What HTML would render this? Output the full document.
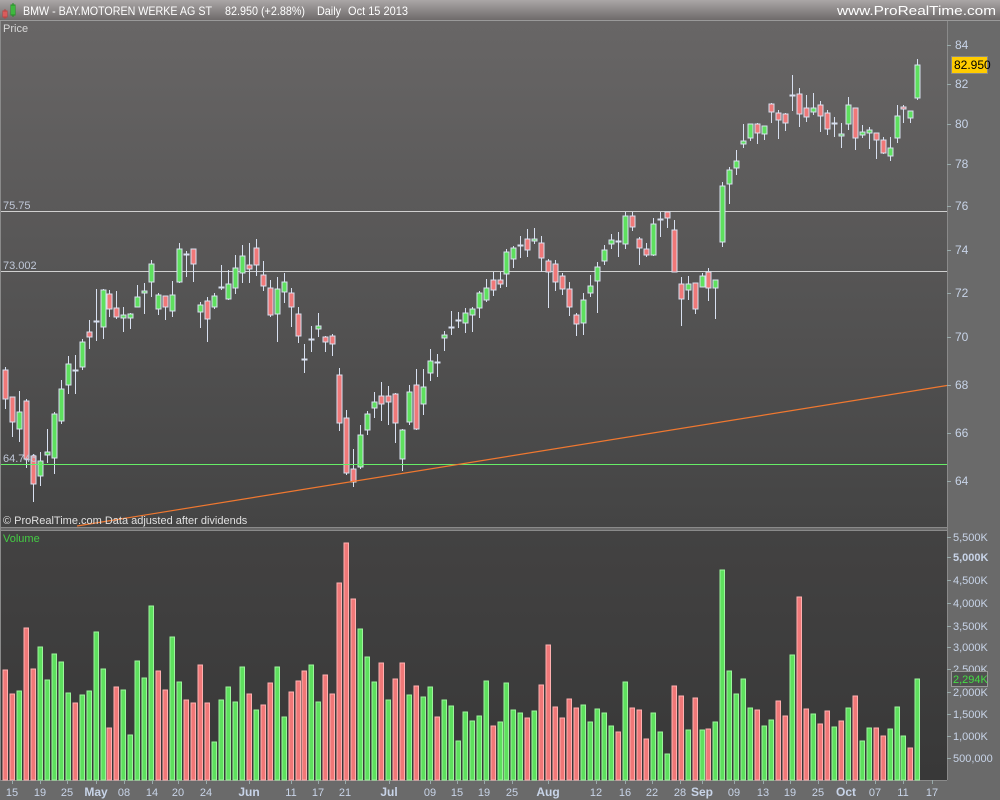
<!DOCTYPE html>
<html><head><meta charset="utf-8">
<style>
body{margin:0;width:1000px;height:800px;overflow:hidden;background:#6a6a6a;font-family:"Liberation Sans",sans-serif}
svg{display:block}
</style></head><body>
<svg id="s" width="1000" height="800" xmlns="http://www.w3.org/2000/svg" font-family="Liberation Sans, sans-serif">
<defs>
<linearGradient id="tb" x1="0" y1="0" x2="0" y2="1"><stop offset="0" stop-color="#aaa6a6"/><stop offset="1" stop-color="#6e6a6a"/></linearGradient>
<linearGradient id="pp" x1="0" y1="0" x2="0" y2="1"><stop offset="0" stop-color="#686666"/><stop offset="1" stop-color="#444444"/></linearGradient>
<linearGradient id="vp" x1="0" y1="0" x2="0" y2="1"><stop offset="0" stop-color="#434242"/><stop offset="1" stop-color="#383838"/></linearGradient>
</defs>
<rect x="0" y="0" width="1000" height="800" fill="#6a6a6a"/>
<rect x="0" y="0" width="1000" height="20" fill="url(#tb)"/>
<line x1="0" y1="20.5" x2="1000" y2="20.5" stroke="#9a9a9a"/>
<rect x="3" y="11" width="4" height="6" fill="#f07878" stroke="#c04040" stroke-width="1"/>
<line x1="5" y1="9" x2="5" y2="19" stroke="#c04040"/>
<rect x="11" y="5" width="4" height="10" fill="#5ee05e" stroke="#209020" stroke-width="1"/>
<line x1="13" y1="3" x2="13" y2="17" stroke="#209020"/>
<g fill="#fff" font-size="12">
<text x="23" y="15" textLength="189" lengthAdjust="spacingAndGlyphs">BMW - BAY.MOTOREN WERKE AG ST</text>
<text x="225" y="15" textLength="80" lengthAdjust="spacingAndGlyphs">82.950 (+2.88%)</text>
<text x="317" y="15" textLength="24" lengthAdjust="spacingAndGlyphs">Daily</text>
<text x="348" y="15" textLength="60" lengthAdjust="spacingAndGlyphs">Oct 15 2013</text>
</g>
<text x="996" y="15" fill="#fff" font-size="13" text-anchor="end" textLength="159" lengthAdjust="spacingAndGlyphs">www.ProRealTime.com</text>
<rect x="1" y="21" width="946" height="506" fill="url(#pp)"/>
<rect x="1" y="531" width="946" height="249" fill="url(#vp)"/>
<line x1="0" y1="527.5" x2="947" y2="527.5" stroke="#8a8a8a"/>
<line x1="0" y1="530.5" x2="947" y2="530.5" stroke="#8a8a8a"/>
<line x1="947.5" y1="21" x2="947.5" y2="780" stroke="#8a8a8a"/>
<line x1="0" y1="780.5" x2="947" y2="780.5" stroke="#8a8a8a"/>
<line x1="0.5" y1="21" x2="0.5" y2="780" stroke="#8a8a8a"/>
<text x="3" y="32" fill="#d8d8d8" font-size="11">Price</text>
<text x="3" y="542" fill="#44cc44" font-size="11">Volume</text>
<line x1="1" y1="211.5" x2="947" y2="211.5" stroke="#d0d0d0"/>
<line x1="1" y1="271.5" x2="947" y2="271.5" stroke="#d0d0d0"/>
<text x="3" y="209" fill="#c0c8d8" font-size="11">75.75</text>
<text x="3" y="269" fill="#c0c8d8" font-size="11">73.002</text>
<g id="c"></g>
<line x1="1" y1="464.5" x2="947" y2="464.5" stroke="#66ee66"/>
<text x="3" y="462" fill="#c0c8d8" font-size="11">64.746</text>
<line x1="77" y1="526" x2="947" y2="385.5" stroke="#f07830" stroke-width="1.2"/>
<text x="3" y="524" fill="#e0e0e0" font-size="11">© ProRealTime.com  Data adjusted after dividends</text>
<g id="v"></g>
<g id="ax" fill="#c8d4e8" font-size="11"></g>
<rect x="951.5" y="56.5" width="36" height="17" fill="#ffcc00" stroke="#888"/>
<text x="954" y="69" font-size="12" fill="#000">82.950</text>
<rect x="951.5" y="671.5" width="36" height="15" fill="#505050" stroke="#999"/>
<text x="953" y="683" font-size="11" fill="#44dd44">2,294K</text>
</svg>
<script>
var NS="http://www.w3.org/2000/svg";
function el(p,n,a,t){var e=document.createElementNS(NS,n);for(var k in a)e.setAttribute(k,a[k]);if(t)e.textContent=t;p.appendChild(e);return e;}
var C=[
"R 370 399 367 409","R 397 422 397 437","G 412 429 391 442","R 401 459 399 468","R 456 484 454 502","G 461 476 452 486","G 452 455 429 463","G 414 458 412 474","G 389 421 380 424","G 364 385 356 394",
"D 370 370 355 394","G 342 367 339 370","R 332 337 320 349","D 321 321 289 341","G 290 327 289 339","R 294 309 290 317","R 308 317 291 319","G 315 318 307 332","G 314 318 313 329","G 297 307 285 307",
"G 291 293 283 314","G 264 282 260 297","G 295 309 293 315","R 296 307 296 320","G 295 311 281 317","G 249 282 243 283","D 254 254 251 277","R 249 264 249 282","G 305 312 302 328","R 301 319 297 342",
"G 296 307 293 309","D 287 287 265 290","G 284 299 270 300","G 268 288 255 294","G 256 273 245 283","R 265 269 243 283","R 248 265 239 276","R 275 286 261 291","R 288 315 280 317","G 289 314 277 342",
"G 282 292 273 303","R 293 307 288 327","R 314 336 307 343","D 359 359 344 373","D 339 339 326 352","G 326 329 313 337","R 337 342 336 352","R 336 344 334 356","R 375 423 368 431","R 418 473 410 475",
"R 469 482 449 487","G 435 467 425 469","G 414 430 411 435","G 402 408 392 418","R 396 404 382 421","R 396 402 386 425","R 394 423 393 443","G 430 459 429 471","G 392 422 385 425","R 385 429 369 430",
"G 387 404 369 415","G 361 373 349 381","D 362 362 354 377","G 335 338 331 351","D 327 327 311 335","D 320 320 312 328","G 313 323 308 333","G 309 315 307 332","G 293 308 291 318","G 288 300 279 302",
"R 280 290 272 296","R 280 284 272 288","G 252 274 249 287","G 248 259 246 268","D 245 245 236 258","R 239 250 229 257","G 239 241 228 244","R 243 258 236 272","R 261 272 259 308","R 264 282 260 291",
"R 276 289 273 295","R 289 307 282 316","R 315 324 313 336","G 300 323 293 335","G 286 293 275 297","G 267 281 262 313","G 250 261 245 265","G 240 244 234 249","D 241 241 232 257","G 216 244 212 249",
"R 216 227 212 231","R 239 248 237 265","R 249 255 243 257","G 224 255 218 256","D 219 219 212 237","R 212 218 212 228","R 230 272 220 272","R 284 299 277 326","G 284 290 276 300","R 283 309 283 314",
"G 276 287 273 287","R 272 288 268 301","G 280 288 280 319","G 186 242 182 247","G 170 184 167 204","G 161 168 150 175","G 141 144 124 148","G 124 138 124 141","R 124 133 123 144","G 126 134 126 140",
"R 104 112 103 123","R 113 120 110 139","R 114 123 113 131","D 95 95 75 111","R 94 114 88 127","R 108 117 95 122","G 108 112 93 115","R 105 116 101 132","R 113 129 110 135","D 123 123 117 137",
"G 134 136 123 148","G 105 124 97 130","R 108 138 108 150","G 132 135 125 138","G 130 133 127 149","R 133 140 133 159","R 140 153 137 154","G 148 156 137 161","G 116 138 105 143","R 107 109 105 123",
"G 111 118 111 123","G 65 98 59 100"];
var cg=document.getElementById("c");
C.forEach(function(s,i){var p=s.split(" "),t=p[0],a=+p[1],b=+p[2],h=+p[3],l=+p[4];var x=Math.round(5+i*6.965)+0.5;
el(cg,"line",{x1:x,y1:h,x2:x,y2:l,stroke:"#d8e0f0"});
if(t=="D"){el(cg,"line",{x1:x-3,y1:a+0.5,x2:x+3,y2:a+0.5,stroke:"#d8e0f0","stroke-width":2});}
else el(cg,"rect",{x:x-2.5,y:a,width:5,height:Math.max(b-a,2),fill:t=="G"?"#5ee05e":"#f07878",stroke:"#d8e0f0"});});
var V=[420,492,483,294,417,351,450,372,396,489,519,495,483,306,417,594,471,480,615,393,444,228,423,480,321,456,510,519,405,519,636,510,471,516,411,492,540,525,459,411,561,486,453,423,405,516,435,492,159,39,207,297,381,456,399,510,447,399,495,468,501,471,561,510,528,633,546,573,558,453,588,576,459,540,549,564,543,465,345,531,564,507,534,525,576,537,549,588,606,456,534,540,627,549,606,672,468,498,600,504,600,597,576,120,423,492,447,534,540,588,570,513,558,375,201,537,552,582,543,591,573,534,498,633,594,594,618,597,531,618,654,447];
var VC="RRGRRGGGGGRGGGGRRGGGGGRRGGRRRRGGGGGRGRRGGRRRGGRRRRRGGGRGRRGRGGRGGGGGGGRGGGGRGRRRRRRGGGGGRGRRRGGGRRGRGRGGGGGGRGGRRGRRGRRGRGRGGRRGGGRG";
var vg=document.getElementById("v");
V.forEach(function(z,i){var x=Math.round(5+i*6.965);var y=530+z/3;var g=VC[i]=="G";
el(vg,"rect",{x:x-2,y:y,width:4.5,height:780-y,fill:g?"#5ee05e":"#f07878",stroke:g?"#9cf59c":"#ffb0b0","stroke-width":1});});
var ax=document.getElementById("ax");
[[84,45],[82,84],[80,124],[78,164],[76,206],[74,250],[72,293],[70,337],[68,385],[66,433],[64,481]].forEach(function(p){
el(ax,"line",{x1:947,y1:p[1]+0.5,x2:951,y2:p[1]+0.5,stroke:"#9aa"});el(ax,"text",{x:955,y:p[1]+4,"font-size":12},p[0]);});
[["5,500K",537],["5,000K",557,1],["4,500K",580],["4,000K",603],["3,500K",626],["3,000K",647],["2,500K",669],["2,000K",692],["1,500K",714],["1,000K",736],["500,000",758]].forEach(function(p){
el(ax,"line",{x1:947,y1:p[1]+0.5,x2:951,y2:p[1]+0.5,stroke:"#9aa"});var t=el(ax,"text",{x:953,y:p[1]+4},p[0]);if(p[2])t.setAttribute("font-weight","bold");});
[["15",12],["19",40],["25",67],["May",96,1],["08",124],["14",152],["20",178],["24",206],["Jun",249,1],["11",291],["17",318],["21",345],["Jul",389,1],["09",430],["15",457],["19",484],["25",512],["Aug",548,1],["12",596],["16",625],["22",652],["28",680],["Sep",702,1],["09",734],["13",763],["19",790],["25",818],["Oct",846,1],["07",875],["11",903],["17",932]].forEach(function(p){
el(ax,"line",{x1:p[1]+0.5,y1:780,x2:p[1]+0.5,y2:784,stroke:"#9aa"});var t=el(ax,"text",{x:p[1],y:796,"text-anchor":"middle","font-size":p[2]?12:11},p[0]);if(p[2])t.setAttribute("font-weight","bold");});
</script>
</body></html>
